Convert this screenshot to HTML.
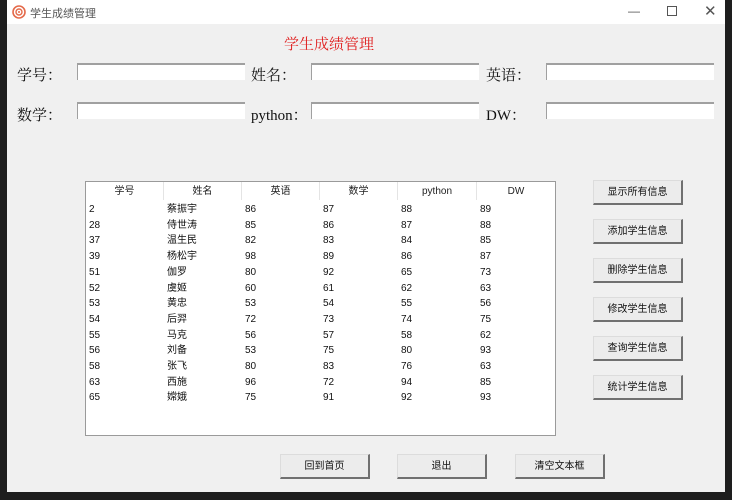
<!DOCTYPE html>
<html><head><meta charset="utf-8"><style>
*{margin:0;padding:0;box-sizing:border-box}
body{width:732px;height:500px;background:#1e1e1e;position:relative;overflow:hidden;font-family:"Liberation Sans","Noto Sans CJK SC",sans-serif}
.win{position:absolute;left:7px;top:0;width:718px;height:492px;background:#f0f0f0}
.title{position:absolute;left:0;top:0;width:718px;height:24px;background:#fff;font-size:11px;color:#555}
.abs{position:absolute}
.lbl{position:absolute;font-family:"Liberation Serif","Noto Serif CJK SC",serif;font-size:15px;color:#111}
.ent{position:absolute;width:168px;height:17px;background:#fff;border-top:2px solid #a0a0a0;border-left:1px solid #a0a0a0}
.tbl{position:absolute;left:78px;top:181px;width:471px;height:255px;background:#fff;border:1px solid #9a9a9a}
.hd{position:absolute;top:0;height:18px;font-size:10px;color:#222;text-align:center;line-height:19px;border-right:1px solid #e4e4e4}
.cell{position:absolute;font-size:10px;color:#111;height:15px;line-height:15px}
.btn{position:absolute;width:90px;height:25px;background:#ececec;border:1px solid #dcdcdc;border-right:2px solid #707070;border-bottom:2px solid #707070;font-size:10px;text-align:center;line-height:24px;color:#111}
</style></head><body>
<div class="win">
<div class="title">
<svg class="abs" style="left:5px;top:5px" width="14" height="14" viewBox="0 0 14 14"><circle cx="7" cy="7" r="6" fill="none" stroke="#e46a4a" stroke-width="1.6"/><circle cx="7" cy="7" r="3" fill="none" stroke="#e46a4a" stroke-width="1.4"/><circle cx="7" cy="7" r="1" fill="#e46a4a"/></svg>
<span class="abs" style="left:23px;top:5px">学生成绩管理</span>
<span class="abs" style="left:621px;top:4px;font-size:12px">—</span>
<span class="abs" style="left:660px;top:6px;width:10px;height:10px;border:1px solid #555"></span>
<span class="abs" style="left:697px;top:2px;font-size:15px;color:#555">✕</span>
</div>
<div class="lbl" style="left:277px;top:33px;color:#e02020;font-size:15px">学生成绩管理</div>
<div class="lbl" style="left:10px;top:64px">学号：</div>
<div class="lbl" style="left:244px;top:64px">姓名：</div>
<div class="lbl" style="left:479px;top:64px">英语：</div>
<div class="lbl" style="left:10px;top:104px">数学：</div>
<div class="lbl" style="left:244px;top:104px">python：</div>
<div class="lbl" style="left:479px;top:104px">DW：</div>
<div class="ent" style="left:70px;top:63px"></div>
<div class="ent" style="left:304px;top:63px"></div>
<div class="ent" style="left:539px;top:63px"></div>
<div class="ent" style="left:70px;top:102px"></div>
<div class="ent" style="left:304px;top:102px"></div>
<div class="ent" style="left:539px;top:102px"></div>
<div class="tbl">
<div class="hd" style="left:0;width:78px">学号</div>
<div class="hd" style="left:78px;width:78px">姓名</div>
<div class="hd" style="left:156px;width:78px">英语</div>
<div class="hd" style="left:234px;width:78px">数学</div>
<div class="hd" style="left:312px;width:79px">python</div>
<div class="hd" style="left:391px;width:78px;border-right:none">DW</div>
<div id="rows"></div>
</div>
<div class="btn" style="left:586px;top:180px">显示所有信息</div>
<div class="btn" style="left:586px;top:219px">添加学生信息</div>
<div class="btn" style="left:586px;top:258px">删除学生信息</div>
<div class="btn" style="left:586px;top:297px">修改学生信息</div>
<div class="btn" style="left:586px;top:336px">查询学生信息</div>
<div class="btn" style="left:586px;top:375px">统计学生信息</div>
<div class="btn" style="left:273px;top:454px">回到首页</div>
<div class="btn" style="left:390px;top:454px">退出</div>
<div class="btn" style="left:508px;top:454px">清空文本框</div>
</div>
<script>
var d=[["2","蔡振宇","86","87","88","89"],["28","侍世涛","85","86","87","88"],["37","温生民","82","83","84","85"],["39","杨松宇","98","89","86","87"],["51","伽罗","80","92","65","73"],["52","虞姬","60","61","62","63"],["53","黄忠","53","54","55","56"],["54","后羿","72","73","74","75"],["55","马克","56","57","58","62"],["56","刘备","53","75","80","93"],["58","张飞","80","83","76","63"],["63","西施","96","72","94","85"],["65","嫦娥","75","91","92","93"]];
var xs=[3,81,159,237,315,394],h="";
d.forEach(function(r,i){r.forEach(function(c,j){h+='<div class="cell" style="left:'+xs[j]+'px;top:'+(20+i*15.7)+'px">'+c+'</div>'})});
document.getElementById("rows").innerHTML=h;
</script>
</body></html>
